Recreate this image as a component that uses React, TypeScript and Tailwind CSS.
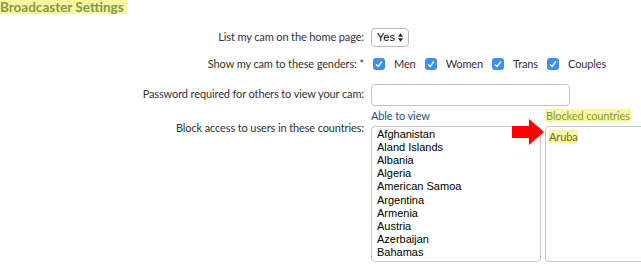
import { useState } from 'react';

const countries = [
  'Afghanistan',
  'Aland Islands',
  'Albania',
  'Algeria',
  'American Samoa',
  'Argentina',
  'Armenia',
  'Austria',
  'Azerbaijan',
  'Bahamas',
];

const genders = ['Men', 'Women', 'Trans', 'Couples'];

function Check({ label }: { label: string }) {
  return (
    <label className="flex items-center gap-[9px] mr-[9px]">
      <span className="h-[12px] w-[12px] rounded-[3px] bg-[#3d8ef7] flex items-center justify-center">
        <svg viewBox="0 0 12 12" className="h-[10px] w-[10px]">
          <path d="M2.5 6.5 L5 9 L9.5 3" stroke="white" strokeWidth="1.6" fill="none" />
        </svg>
      </span>
      <span>{label}</span>
    </label>
  );
}

export default function App() {
  const [listed] = useState('Yes');

  return (
    <div className="w-[641px] h-[265px] bg-white overflow-hidden text-[11px] tracking-[-0.12px] text-[#333] font-['Lato','Open_Sans',sans-serif]">
      <h2 className="inline-block bg-[#fbf7a1] text-[#7e9a4b] font-bold text-[13.5px] tracking-normal leading-[14px] pr-[3px]">
        Broadcaster Settings
      </h2>

      <div className="mt-[11px] flex items-center">
        <div className="w-[366px] shrink-0 text-right pr-[2px]">List my cam on the home page:</div>
        <div className="ml-[5px] h-[19px] w-[38px] border border-[#bbb] rounded-[4px] flex items-center justify-center gap-[3px] font-['Liberation_Sans',sans-serif] text-[11px] tracking-normal text-black">
          {listed}
          <svg viewBox="0 0 6 10" className="h-[9px] w-[5px]">
            <path d="M0 4 L3 0 L6 4 Z M0 6 L3 10 L6 6 Z" fill="#222" />
          </svg>
        </div>
      </div>

      <div className="mt-[8px] flex items-center h-[19px]">
        <div className="w-[366px] shrink-0 text-right pr-[2px]">Show my cam to these genders: *</div>
        <div className="ml-[7px] flex items-center">
          {genders.map((g) => (
            <Check key={g} label={g} />
          ))}
        </div>
      </div>

      <div className="mt-[10px] flex items-center">
        <div className="w-[366px] shrink-0 text-right pr-[2px]">Password required for others to view your cam:</div>
        <div className="ml-[5px] h-[22px] w-[199px] border border-[#c4c4c4] rounded-[4px]" />
      </div>

      <div className="mt-[3px] flex">
        <div className="w-[366px] shrink-0 text-right pr-[2px] pt-[11px]">Block access to users in these countries:</div>
        <div className="ml-[5px] flex shrink-0">
          <div className="w-[170px] shrink-0">
            <div className="text-[#1e4f78] leading-[14px] h-[17px]">Able to view</div>
            <div className="h-[136px] border border-[#c8c8c8] rounded-[4px] px-[5px] py-[1px] font-['Liberation_Sans',sans-serif] text-[11px] tracking-normal leading-[13.2px] text-black">
              {countries.map((c) => (
                <div key={c}>{c}</div>
              ))}
            </div>
          </div>
          <div className="w-[100px] shrink-0 ml-[4px] relative">
            <div className="leading-[14px] h-[17px]">
              <span className="bg-[#fbf7a1] text-[#7e9a4b] px-[1px]">Blocked countries</span>
            </div>
            <div className="h-[136px] border border-[#c8c8c8] rounded-[4px] px-[3px] py-[2px]">
              <span className="bg-[#fbf7a1] text-[#6b6b2a]">Aruba</span>
            </div>
            <svg viewBox="0 0 32 26" className="absolute left-[-33px] top-[10px] w-[32px] h-[26px]">
              <path d="M0 7 H17 V0 L32 13 L17 26 V19 H0 Z" fill="#f00" />
            </svg>
          </div>
        </div>
      </div>
    </div>
  );
}
